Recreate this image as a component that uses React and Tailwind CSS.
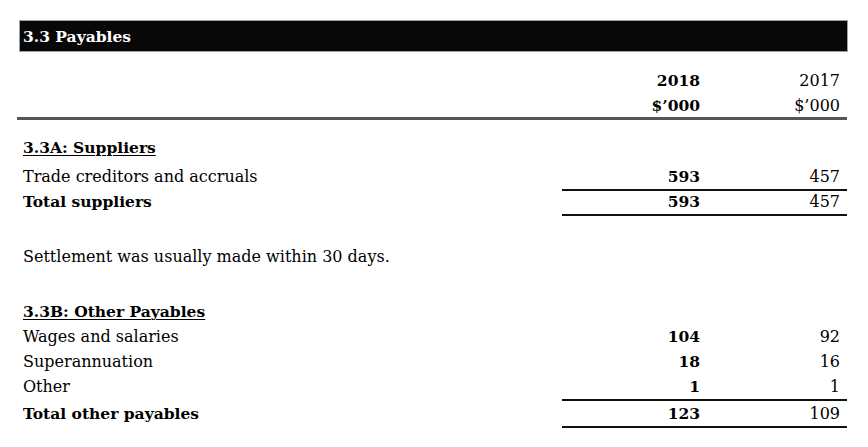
import React from "react";

const Row = ({ label, a, b, labelClass = "", h = "h-[25px]", bordered = false }) => (
  <div className={`grid grid-cols-[545px_143px_142px] ${h} leading-[25px]`}>
    <div className={`pl-[6px] whitespace-nowrap ${labelClass}`}>{label}</div>
    <div className={`text-right pr-[5px] font-bold text-[15.5px] ${bordered ? "border-b-2 border-[#111]" : ""}`}>{a}</div>
    <div className={`text-right pr-[7px] ${bordered ? "border-b-2 border-[#111]" : ""}`}>{b}</div>
  </div>
);

const B = "font-bold text-[15.5px]";

export default function App() {
  return (
    <div className="w-[868px] h-[447px] bg-white overflow-hidden font-['DejaVu_Serif',serif] text-[16px] text-black">
      <div className="pt-[20px] pl-[19px]">
        <div className="w-[829px] h-[32px] bg-[#080808] border border-[#a0a0a0] text-white font-bold text-[15.5px] leading-[32px] pl-[3px]">
          3.3 Payables
        </div>
      </div>

      <div className="ml-[17px] w-[830px]">
        <div className="mt-[16px]">
          <Row label="" a="2018" b="2017" />
          <Row label="" a="$’000" b="$’000" />
        </div>
        <div className="mt-[-1px] h-[3px] bg-[#555]" />

        <div className="mt-[15px]">
          <Row label={<span className="underline decoration-1 underline-offset-2">3.3A: Suppliers</span>} labelClass={B} />
        </div>
        <div className="mt-[4px]">
          <Row label="Trade creditors and accruals" a="593" b="457" bordered />
          <Row label="Total suppliers" a="593" b="457" labelClass={B} h="h-[27px]" bordered />
        </div>

        <div className="mt-[28px] h-[25px] leading-[25px] pl-[6px]">
          Settlement was usually made within 30 days.
        </div>

        <div className="mt-[30px]">
          <Row label={<span className="underline decoration-1 underline-offset-2">3.3B: Other Payables</span>} labelClass={B} />
          <Row label="Wages and salaries" a="104" b="92" />
          <Row label="Superannuation" a="18" b="16" />
          <Row label="Other" a="1" b="1" h="h-[27px]" bordered />
          <Row label="Total other payables" a="123" b="109" labelClass={B} bordered />
        </div>
      </div>
    </div>
  );
}
